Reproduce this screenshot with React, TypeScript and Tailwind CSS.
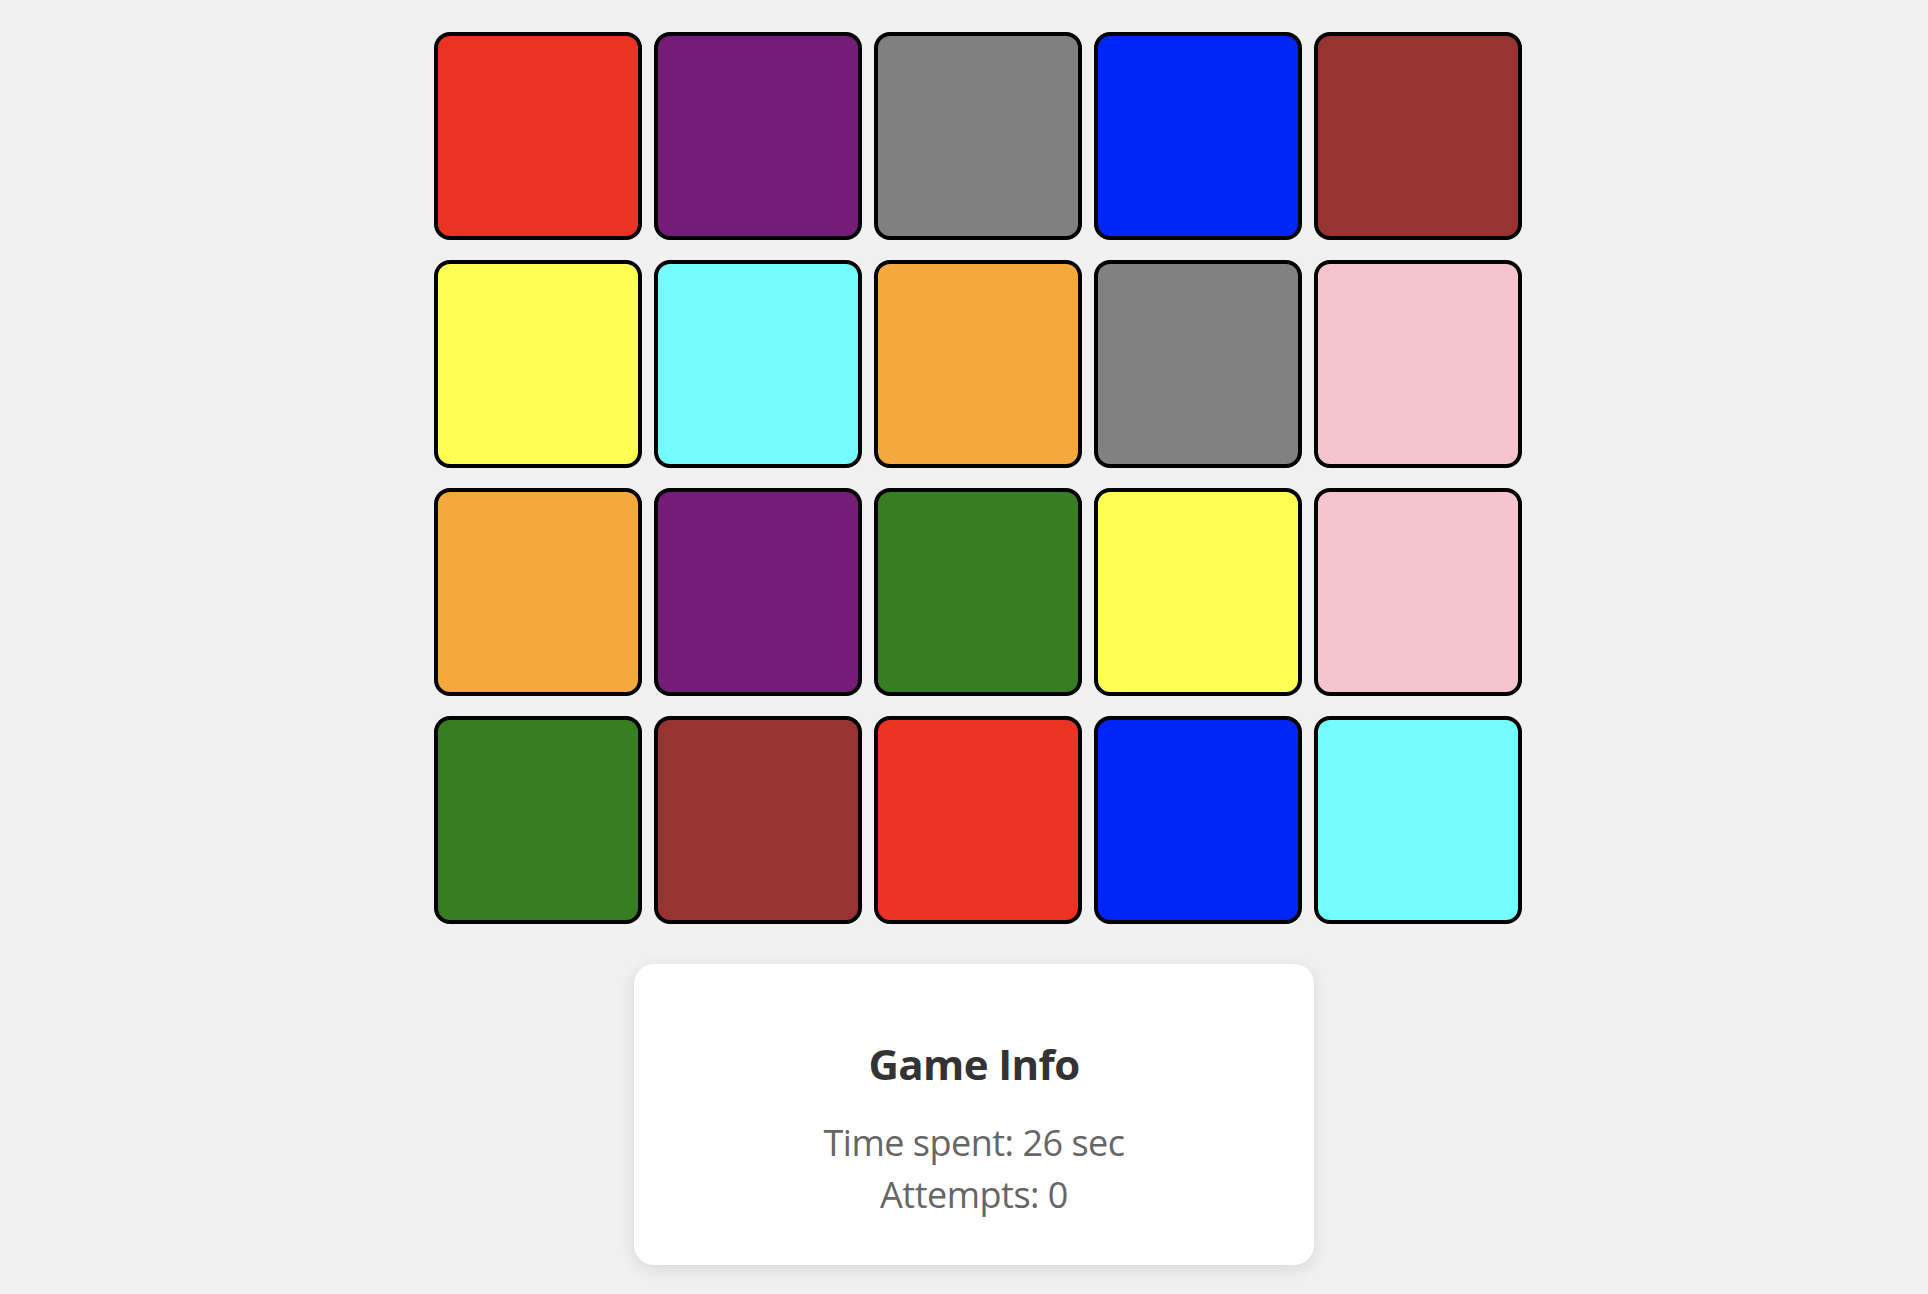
const tiles = [
  '#ea3323', '#751c79', '#808080', '#0026f5', '#973431',
  '#ffff54', '#74fdfe', '#f4a83d', '#818181', '#f6c4cd',
  '#f4a83d', '#751c79', '#377e22', '#ffff54', '#f6c4cd',
  '#377e22', '#973431', '#ea3323', '#0026f5', '#74fdfe',
];

export default function App() {
  return (
    <div
      className="min-h-screen bg-[#f0f0f0] flex flex-col items-center pt-[32px] pl-[20px] pb-[24px]"
      style={{ fontFamily: '"Open Sans", "Liberation Sans", sans-serif' }}
    >
      <div className="ml-[8px] grid grid-cols-[repeat(5,208px)] gap-x-[12px] gap-y-[20px]">
        {tiles.map((c, i) => (
          <div
            key={i}
            className="w-[208px] h-[208px] rounded-[16px] border-[4px] border-black"
            style={{ backgroundColor: c }}
          />
        ))}
      </div>
      <div className="mt-[40px] w-[680px] h-[301px] bg-white rounded-[20px] shadow-[0_4px_16px_rgba(0,0,0,0.1)] flex flex-col items-center pt-[72px]">
        <h2 className="text-[42px] leading-[56px] font-bold text-[#333333] tracking-[-0.6px]">Game Info</h2>
        <p className="mt-[25px] text-[36px] leading-[52px] text-[#666666] tracking-[-0.5px]">Time spent: 26 sec</p>
        <p className="text-[36px] leading-[52px] text-[#666666] tracking-[-0.5px]">Attempts: 0</p>
      </div>
    </div>
  );
}
